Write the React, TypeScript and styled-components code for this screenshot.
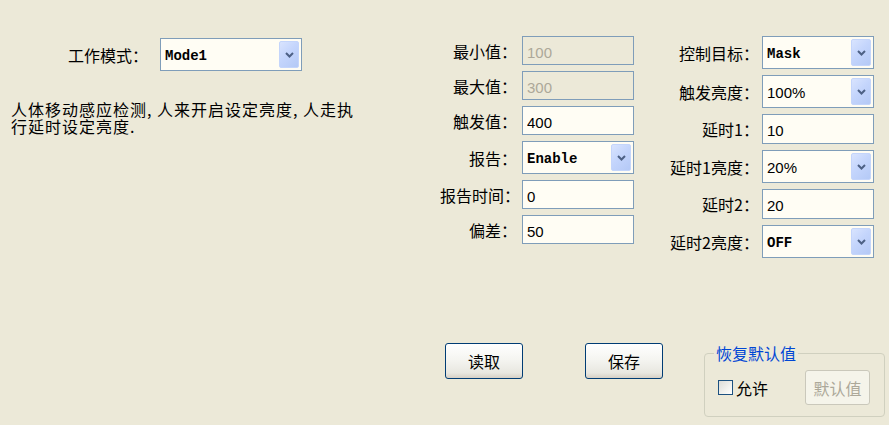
import React from "react";
import styled, { createGlobalStyle } from "styled-components";

const GlobalStyle = createGlobalStyle`
  html, body {
    margin: 0;
    padding: 0;
    background: #ece9d8;
  }
`;

const Page = styled.div`
  width: 889px;
  height: 425px;
  box-sizing: border-box;
  padding-top: 36px;
  background: #ece9d8;
  color: #000;
  font-family: "Noto Sans CJK SC", "Noto Sans", sans-serif;
  font-size: 16px;
  overflow: hidden;
`;

const TopRow = styled.div`
  display: flex;
  align-items: flex-start;
`;

const LeftPane = styled.div`
  width: 440px;
  padding-top: 2px;
`;

const Description = styled.p`
  margin: 30px 0 0;
  padding-left: 11px;
  font-size: 16px;
  line-height: 17px;
  letter-spacing: 1px;
`;

const FormColumn = styled.div<{ $offset?: number }>`
  display: flex;
  flex-direction: column;
  gap: 6px;
  margin-left: ${(p) => p.$offset ?? 0}px;
`;

const FieldRow = styled.div`
  display: flex;
  align-items: center;
`;

const FieldLabel = styled.label<{ $width: number; $gap: number }>`
  width: ${(p) => p.$width}px;
  margin-right: ${(p) => p.$gap}px;
  text-align: right;
  white-space: nowrap;
  line-height: 1;
  font-size: 16px;
`;

const TextBox = styled.input<{ $height: number }>`
  box-sizing: border-box;
  width: 112px;
  height: ${(p) => p.$height}px;
  margin: 0;
  padding: 3px 0 0 4px;
  border: 1px solid #7f9db9;
  background: #fffdf4;
  color: #000;
  font-family: "Liberation Sans", Arial, sans-serif;
  font-size: 15px;
  outline: none;

  &:disabled {
    background: #ece9d8;
    color: #aca899;
  }
`;

const Combo = styled.div<{ $width: number; $height: number }>`
  box-sizing: border-box;
  display: flex;
  align-items: stretch;
  width: ${(p) => p.$width}px;
  height: ${(p) => p.$height}px;
  padding: 2px;
  border: 1px solid #7f9db9;
  background: #fffdf4;
`;

const ComboValue = styled.span<{ $mono?: boolean }>`
  flex: 1;
  display: flex;
  align-items: center;
  padding: 2px 0 0 2px;
  font-family: ${(p) =>
    p.$mono ? '"Liberation Mono", "Courier New", monospace' : '"Liberation Sans", Arial, sans-serif'};
  font-size: ${(p) => (p.$mono ? 14 : 15)}px;
  font-weight: ${(p) => (p.$mono ? 700 : 400)};
  white-space: nowrap;
`;

const DropButton = styled.span`
  box-sizing: border-box;
  width: 20px;
  display: flex;
  align-items: center;
  justify-content: center;
  border: 1px solid #c4d5fb;
  border-radius: 2px;
  background: linear-gradient(135deg, #d9e4fe 0%, #c4d5fc 45%, #b4c9f6 100%);
`;

const ButtonRow = styled.div`
  display: flex;
  align-items: flex-start;
  margin-top: 85px;
  padding-left: 445px;
`;

const XpButton = styled.button<{ $gap?: number }>`
  box-sizing: border-box;
  width: 78px;
  height: 36px;
  margin: 0 0 0 ${(p) => p.$gap ?? 0}px;
  padding: 0;
  border: 1px solid #003c74;
  border-radius: 3px;
  background: linear-gradient(180deg, #ffffff 0%, #f5f5f1 45%, #e8e7e0 85%, #d6d0c5 100%);
  color: #000;
  font-family: "Noto Sans CJK SC", sans-serif;
  font-size: 16px;
  line-height: 1;
`;

const GroupBox = styled.fieldset`
  box-sizing: border-box;
  width: 181px;
  height: 73px;
  margin: 1px 0 0 41px;
  padding: 8px 14px 0 13px;
  border: 1px solid #d0d0bf;
  border-radius: 4px;
`;

const GroupTitle = styled.legend`
  margin-left: -4px;
  padding: 0 2px;
  color: #0046d5;
  font-size: 16px;
  line-height: 18px;
`;

const GroupBody = styled.div`
  display: flex;
  align-items: center;
`;

const CheckBox = styled.input`
  appearance: none;
  box-sizing: border-box;
  width: 15px;
  height: 15px;
  margin: 0 3px 0 0;
  border: 1px solid #1c5180;
  background: linear-gradient(135deg, #dcdcd7 0%, #f2f2ee 60%, #ffffff 100%);
`;

const CheckLabel = styled.label`
  font-size: 16px;
  line-height: 1;
`;

const DisabledButton = styled.button`
  box-sizing: border-box;
  width: 65px;
  height: 35px;
  margin-left: auto;
  padding: 0;
  border: 1px solid #cac8bb;
  border-radius: 3px;
  background: #f5f4ea;
  color: #aca899;
  font-family: "Noto Sans CJK SC", sans-serif;
  font-size: 16px;
  line-height: 1;
`;

const Chevron = () => (
  <svg width="9" height="6" viewBox="0 0 9 6">
    <path d="M1 1 L4.5 4.5 L8 1" fill="none" stroke="#4d6185" strokeWidth="2" />
  </svg>
);

type ComboProps = { value: string; mono?: boolean; width?: number; height?: number };

const ComboBox: React.FC<ComboProps> = ({ value, mono, width = 112, height = 33 }) => (
  <Combo $width={width} $height={height}>
    <ComboValue $mono={mono}>{value}</ComboValue>
    <DropButton>
      <Chevron />
    </DropButton>
  </Combo>
);

type Field = {
  label: string;
  value: string;
  kind: "text" | "disabled" | "combo";
  mono?: boolean;
};

const middleFields: Field[] = [
  { label: "最小值：", value: "100", kind: "disabled" },
  { label: "最大值：", value: "300", kind: "disabled" },
  { label: "触发值：", value: "400", kind: "text" },
  { label: "报告：", value: "Enable", kind: "combo", mono: true },
  { label: "报告时间：", value: "0", kind: "text" },
  { label: "偏差：", value: "50", kind: "text" },
];

const rightFields: Field[] = [
  { label: "控制目标：", value: "Mask", kind: "combo", mono: true },
  { label: "触发亮度：", value: "100%", kind: "combo" },
  { label: "延时1：", value: "10", kind: "text" },
  { label: "延时1亮度：", value: "20%", kind: "combo" },
  { label: "延时2：", value: "20", kind: "text" },
  { label: "延时2亮度：", value: "OFF", kind: "combo", mono: true },
];

const FieldList: React.FC<{
  fields: Field[];
  labelWidth: number;
  gap: number;
  inputHeight: number;
  offset?: number;
}> = ({ fields, labelWidth, gap, inputHeight, offset }) => (
  <FormColumn $offset={offset}>
    {fields.map((f) => (
      <FieldRow key={f.label}>
        <FieldLabel $width={labelWidth} $gap={gap}>
          {f.label}
        </FieldLabel>
        {f.kind === "combo" ? (
          <ComboBox value={f.value} mono={f.mono} />
        ) : (
          <TextBox
            $height={inputHeight}
            defaultValue={f.value}
            disabled={f.kind === "disabled"}
          />
        )}
      </FieldRow>
    ))}
  </FormColumn>
);

export default function App() {
  return (
    <>
      <GlobalStyle />
      <Page>
        <TopRow>
          <LeftPane>
            <FieldRow>
              <FieldLabel $width={148} $gap={12}>
                工作模式：
              </FieldLabel>
              <ComboBox value="Mode1" mono width={142} />
            </FieldRow>
            <Description>
              人体移动感应检测, 人来开启设定亮度, 人走执
              <br />
              行延时设定亮度.
            </Description>
          </LeftPane>
          <FieldList fields={middleFields} labelWidth={77} gap={5} inputHeight={29} />
          <FieldList fields={rightFields} labelWidth={97} gap={3} inputHeight={30} offset={28} />
        </TopRow>
        <ButtonRow>
          <XpButton>读取</XpButton>
          <XpButton $gap={62}>保存</XpButton>
          <GroupBox>
            <GroupTitle>恢复默认值</GroupTitle>
            <GroupBody>
              <CheckBox type="checkbox" id="allow" />
              <CheckLabel htmlFor="allow">允许</CheckLabel>
              <DisabledButton disabled>默认值</DisabledButton>
            </GroupBody>
          </GroupBox>
        </ButtonRow>
      </Page>
    </>
  );
}
